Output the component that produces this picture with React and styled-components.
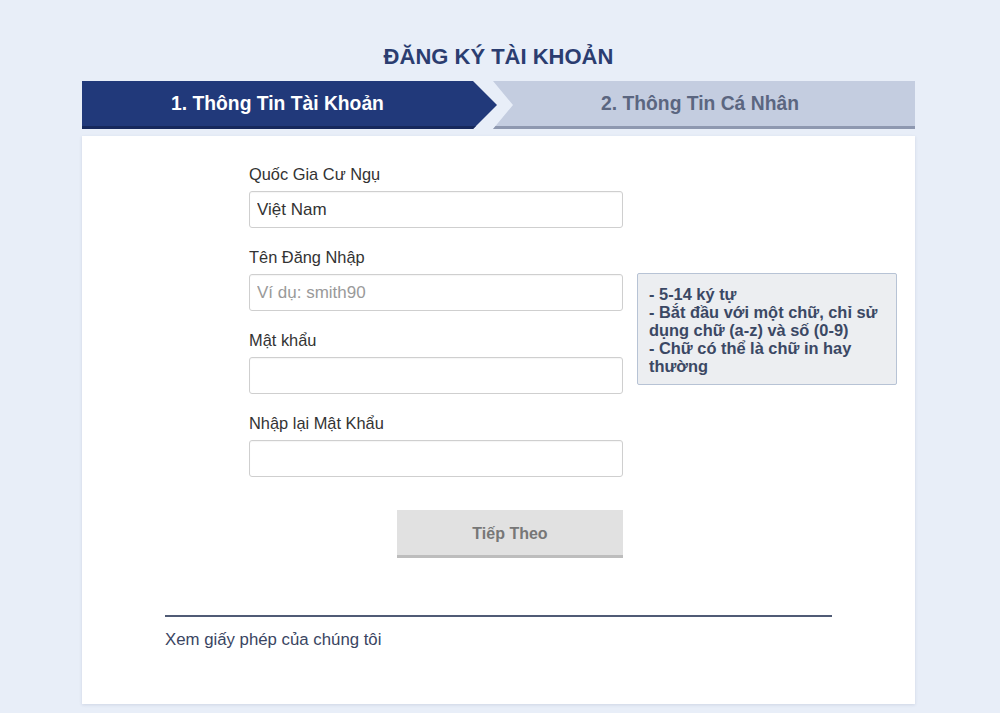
import React from "react";
import styled, { createGlobalStyle } from "styled-components";

const Global = createGlobalStyle`
  html, body { margin: 0; padding: 0; }
  body {
    background: #e8eef8;
    font-family: "Liberation Sans", Arial, sans-serif;
    color: #333;
  }
  * { box-sizing: border-box; }
`;

const Page = styled.div`
  width: 833px;
  margin-left: 82px;
  padding-top: 44px;
  min-height: 713px;
`;

const Title = styled.h1`
  margin: 0;
  text-align: center;
  font-size: 22px;
  line-height: 25px;
  font-weight: 700;
  color: #2b3d70;
`;

const Steps = styled.div`
  display: flex;
  margin-top: 12px;
  height: 48px;
`;

const Step = styled.div`
  display: flex;
  align-items: center;
  justify-content: center;
  font-size: 19.3px;
  font-weight: 700;
  height: 48px;
  ${(p) =>
    p.$active
      ? `
    width: 415px;
    flex: none;
    background: #21397a;
    color: #ffffff;
    border-bottom: 3px solid #16285c;
    padding-right: 24px;
    clip-path: polygon(0 0, calc(100% - 24px) 0, 100% 50%, calc(100% - 24px) 100%, 0 100%);
  `
      : `
    flex: 1;
    margin-left: -4px;
    background: #c4cde0;
    color: #5b6680;
    border-bottom: 3px solid #8e98b0;
    padding-right: 8px;
    clip-path: polygon(0 0, 100% 0, 100% 100%, 0 100%, 20px 50%);
  `}
`;

const Card = styled.div`
  margin-top: 7px;
  background: #ffffff;
  box-shadow: 0 1px 3px rgba(60, 80, 120, 0.15);
  padding: 28px 83px 54px;
`;

const FormGrid = styled.div`
  display: grid;
  grid-template-columns: 374px 260px;
  column-gap: 14px;
  margin-left: 84px;
`;

const Label = styled.label`
  grid-column: 1;
  display: block;
  font-size: 16.4px;
  line-height: 20px;
  color: #333;
  margin-top: ${(p) => (p.$first ? "0" : "19px")};
  margin-bottom: 7px;
`;

const Input = styled.input`
  grid-column: 1;
  height: 37px;
  width: 374px;
  border: 1px solid #cfcfcf;
  border-radius: 3px;
  padding: 0 7px;
  font-family: "Liberation Sans", Arial, sans-serif;
  font-size: 17px;
  color: #333;
  background: #fff;
  box-shadow: inset 0 1px 1px rgba(0, 0, 0, 0.04);
  outline: none;
  &::placeholder { color: #9a9a9a; }
`;

const Hint = styled.div`
  grid-column: 2;
  grid-row: 4 / span 3;
  align-self: start;
  margin-top: -1px;
  background: #eceef1;
  border: 1px solid #b7c3d5;
  border-radius: 2px;
  padding: 11px 8px 9px 11px;
  font-size: 16.4px;
  line-height: 18px;
  font-weight: 700;
  color: #3b4864;
  white-space: nowrap;
`;

const Actions = styled.div`
  grid-column: 1;
  display: flex;
  justify-content: flex-end;
  margin-top: 33px;
`;

const NextButton = styled.button`
  width: 226px;
  height: 48px;
  border: none;
  border-bottom: 3px solid #bdbdbd;
  background: #e1e1e1;
  color: #777;
  font-family: "Liberation Sans", Arial, sans-serif;
  font-size: 16px;
  font-weight: 700;
  padding-top: 3px;
  cursor: pointer;
`;

const Divider = styled.hr`
  margin: 57px 0 0;
  border: none;
  border-top: 2px solid #505b75;
`;

const FooterLink = styled.a`
  display: block;
  margin-top: 13px;
  font-size: 16.8px;
  line-height: 20px;
  color: #3a4562;
  text-decoration: none;
`;

export default function App() {
  return (
    <>
      <Global />
      <Page>
        <Title>ĐĂNG KÝ TÀI KHOẢN</Title>
        <Steps>
          <Step $active>1. Thông Tin Tài Khoản</Step>
          <Step>2. Thông Tin Cá Nhân</Step>
        </Steps>
        <Card>
          <FormGrid>
            <Label $first>Quốc Gia Cư Ngụ</Label>
            <Input defaultValue="Việt Nam" />
            <Label>Tên Đăng Nhập</Label>
            <Input placeholder="Ví dụ: smith90" />
            <Hint>
              - 5-14 ký tự
              <br />- Bắt đầu với một chữ, chỉ sử
              <br />
              dụng chữ (a-z) và số (0-9)
              <br />- Chữ có thể là chữ in hay
              <br />
              thường
            </Hint>
            <Label>Mật khẩu</Label>
            <Input type="password" />
            <Label>Nhập lại Mật Khẩu</Label>
            <Input type="password" />
            <Actions>
              <NextButton>Tiếp Theo</NextButton>
            </Actions>
          </FormGrid>
          <Divider />
          <FooterLink href="#">Xem giấy phép của chúng tôi</FooterLink>
        </Card>
      </Page>
    </>
  );
}
